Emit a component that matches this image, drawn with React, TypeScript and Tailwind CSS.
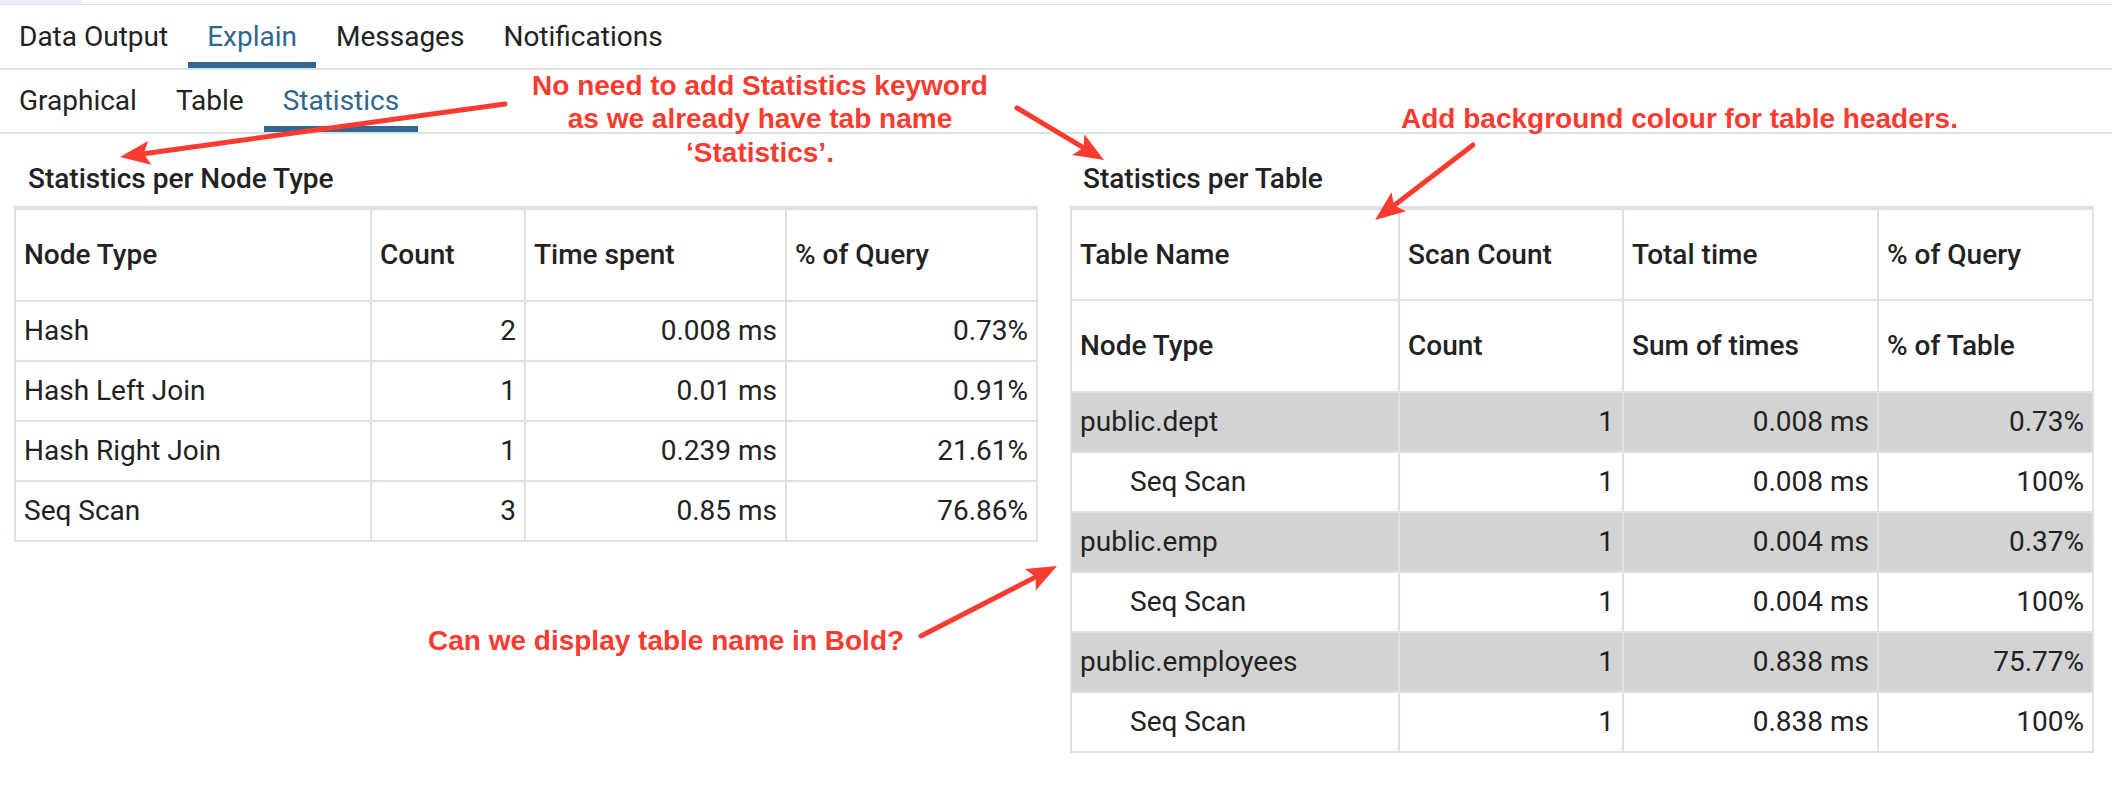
import React from "react";

function Arrow({ x1, y1, x2, y2 }: { x1: number; y1: number; x2: number; y2: number }) {
  const dx = x2 - x1;
  const dy = y2 - y1;
  const L = Math.hypot(dx, dy);
  const ux = dx / L;
  const uy = dy / L;
  const hl = 30;
  const hw = 12;
  const bx = x2 - ux * hl;
  const by = y2 - uy * hl;
  const px = -uy;
  const py = ux;
  const pts = `${x2},${y2} ${bx + px * hw},${by + py * hw} ${bx + ux * 6},${by + uy * 6} ${bx - px * hw},${by - py * hw}`;
  return (
    <g>
      <line x1={x1} y1={y1} x2={bx + ux * 4} y2={by + uy * 4} stroke="#fc3b30" strokeWidth={5} strokeLinecap="round" />
      <polygon points={pts} fill="#fc3b30" />
    </g>
  );
}

const nodeRows = [
  ["Hash", "2", "0.008 ms", "0.73%"],
  ["Hash Left Join", "1", "0.01 ms", "0.91%"],
  ["Hash Right Join", "1", "0.239 ms", "21.61%"],
  ["Seq Scan", "3", "0.85 ms", "76.86%"],
];

const tableRows = [
  { name: "public.dept", count: "1", time: "0.008 ms", pct: "0.73%", sub: ["Seq Scan", "1", "0.008 ms", "100%"] },
  { name: "public.emp", count: "1", time: "0.004 ms", pct: "0.37%", sub: ["Seq Scan", "1", "0.004 ms", "100%"] },
  { name: "public.employees", count: "1", time: "0.838 ms", pct: "75.77%", sub: ["Seq Scan", "1", "0.838 ms", "100%"] },
];

function HeadCell({ children, h }: { children: React.ReactNode; h: string }) {
  return (
    <div className={"bg-white flex items-center px-[8px] font-medium leading-[34px] whitespace-nowrap " + h}>{children}</div>
  );
}

function Cell({ children, right, gray, indent }: { children: React.ReactNode; right?: boolean; gray?: boolean; indent?: boolean }) {
  return (
    <div
      className={
        "h-[58px] flex items-center leading-[34px] whitespace-nowrap " +
        (right ? "justify-end pr-[8px] pl-[8px] " : indent ? "pl-[58px] pr-[8px] " : "px-[8px] ") +
        (gray ? "bg-[#d3d3d3]" : "bg-white")
      }
    >
      {children}
    </div>
  );
}

function TabRow({ tabs, pt, pb }: { tabs: [string, boolean][]; pt: string; pb: string }) {
  return (
    <div className={"flex gap-[1px] " + pt}>
      {tabs.map(([l, a]) => (
        <div key={l} className="flex flex-col">
          <div className={pb}>
            <div className={"px-[19px] leading-[34px] whitespace-nowrap " + (a ? "text-[#326690]" : "text-[#222]")}>{l}</div>
          </div>
          <div className={"h-[6px] " + (a ? "bg-[#326690]" : "bg-transparent")} />
        </div>
      ))}
    </div>
  );
}

export default function App() {
  return (
    <div className="relative w-[2112px] h-[790px] bg-white overflow-hidden font-['Roboto',sans-serif] text-[#222] text-[28px]">
      {/* top strip */}
      <div className="flex h-[4px]">
        <div className="w-[82px] bg-[#eceff3]" />
      </div>
      <div className="h-[1px] bg-[#dde0e6]" />

      <TabRow
        pt="pt-[15px]"
        pb="pb-[8px]"
        tabs={[
          ["Data Output", false],
          ["Explain", true],
          ["Messages", false],
          ["Notifications", false],
        ]}
      />
      <div className="h-[2px] bg-[#dde0e6]" />

      <TabRow
        pt="pt-[14px]"
        pb="pb-[8px]"
        tabs={[
          ["Graphical", false],
          ["Table", false],
          ["Statistics", true],
        ]}
      />
      <div className="h-[2px] bg-[#dde0e6]" />

      {/* content */}
      <div className="grid grid-cols-2">
        <div className="pl-[14px] pr-[18px] pt-[28px]">
          <div className="pl-[14px] font-medium leading-[34px] mb-[10px]">Statistics per Node Type</div>
          <div className="grid grid-cols-[354px_152px_259px_249px] gap-[2px] bg-[#dde0e6] p-[2px] pt-[4px] w-[1024px]">
            <HeadCell h="h-[90px]">Node Type</HeadCell>
            <HeadCell h="h-[90px]">Count</HeadCell>
            <HeadCell h="h-[90px]">Time spent</HeadCell>
            <HeadCell h="h-[90px]">% of Query</HeadCell>
            {nodeRows.map((r) => (
              <React.Fragment key={r[0]}>
                <Cell>{r[0]}</Cell>
                <Cell right>{r[1]}</Cell>
                <Cell right>{r[2]}</Cell>
                <Cell right>{r[3]}</Cell>
              </React.Fragment>
            ))}
          </div>
        </div>

        <div className="pl-[14px] pr-[18px] pt-[28px]">
          <div className="pl-[13px] font-medium leading-[34px] mb-[10px]">Statistics per Table</div>
          <div className="grid grid-cols-[326px_222px_253px_213px] gap-[2px] bg-[#dde0e6] p-[2px] pt-[4px] w-[1024px]">
            <HeadCell h="h-[89px]">Table Name</HeadCell>
            <HeadCell h="h-[89px]">Scan Count</HeadCell>
            <HeadCell h="h-[89px]">Total time</HeadCell>
            <HeadCell h="h-[89px]">% of Query</HeadCell>
            <HeadCell h="h-[90px]">Node Type</HeadCell>
            <HeadCell h="h-[90px]">Count</HeadCell>
            <HeadCell h="h-[90px]">Sum of times</HeadCell>
            <HeadCell h="h-[90px]">% of Table</HeadCell>
            {tableRows.map((r) => (
              <React.Fragment key={r.name}>
                <Cell gray>{r.name}</Cell>
                <Cell gray right>{r.count}</Cell>
                <Cell gray right>{r.time}</Cell>
                <Cell gray right>{r.pct}</Cell>
                <Cell indent>{r.sub[0]}</Cell>
                <Cell right>{r.sub[1]}</Cell>
                <Cell right>{r.sub[2]}</Cell>
                <Cell right>{r.sub[3]}</Cell>
              </React.Fragment>
            ))}
          </div>
        </div>
      </div>

      {/* annotations (overlay) */}
      <div className="absolute left-[460px] top-[69px] w-[600px] text-center font-['Liberation_Sans',Arial,sans-serif] font-bold text-[28px] leading-[33.4px] text-[#fc3b30]">
        No need to add Statistics keyword
        <br />
        as we already have tab name
        <br />
        ‘Statistics’.
      </div>
      <div className="absolute left-[1401px] top-[102px] whitespace-nowrap font-['Liberation_Sans',Arial,sans-serif] font-bold text-[28px] leading-[33.4px] text-[#fc3b30]">
        Add background colour for table headers.
      </div>
      <div className="absolute left-[428px] top-[624px] whitespace-nowrap font-['Liberation_Sans',Arial,sans-serif] font-bold text-[28px] leading-[33.4px] text-[#fc3b30]">
        Can we display table name in Bold?
      </div>

      <svg className="absolute left-0 top-0 pointer-events-none" width={2112} height={790} viewBox="0 0 2112 790">
        <Arrow x1={505} y1={104} x2={120} y2={157} />
        <Arrow x1={1017} y1={108} x2={1104} y2={160} />
        <Arrow x1={1473} y1={145} x2={1375} y2={220} />
        <Arrow x1={921} y1={636} x2={1057} y2={566} />
      </svg>
    </div>
  );
}
